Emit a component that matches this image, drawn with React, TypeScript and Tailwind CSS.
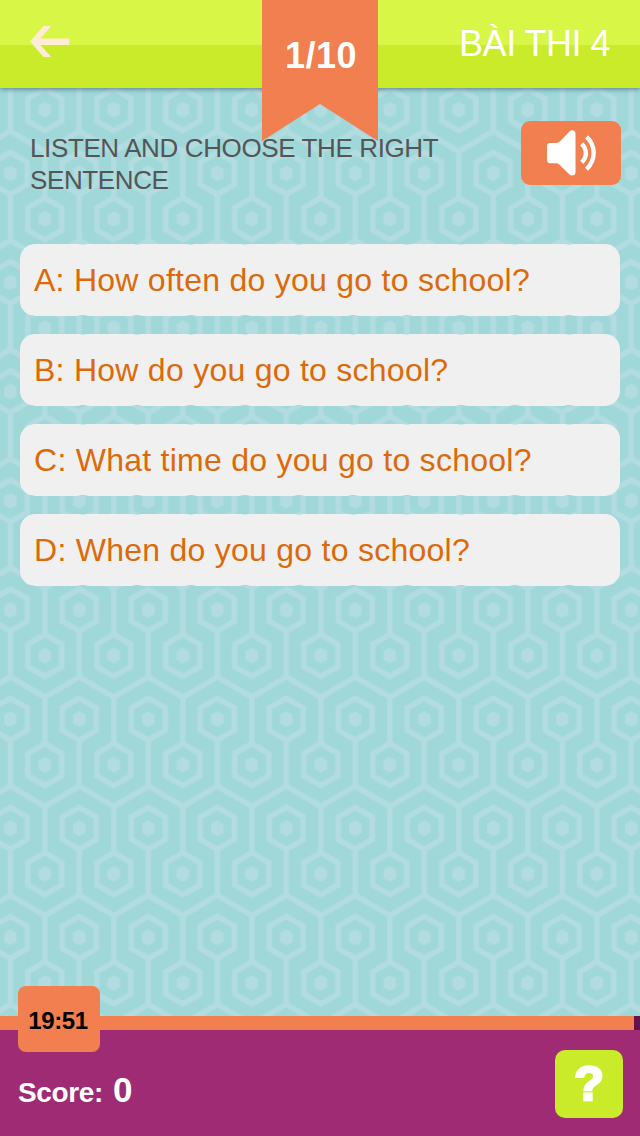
const OPTIONS = [
  { key: "A", text: "How often do you go to school?" },
  { key: "B", text: "How do you go to school?" },
  { key: "C", text: "What time do you go to school?" },
  { key: "D", text: "When do you go to school?" },
];

function HexCell({ x, y }: Readonly<{ x: number; y: number }>) {
  return (
    <g transform={`translate(${x} ${y})`}>
      <path
        d="M0 -21L17 -11.2V11.2L0 21L-17 11.2V-11.2Z"
        fill="none"
        stroke="#b2dce0"
        strokeWidth="5.4"
      />
      <path d="M0 -7.8L6.2 -4.4V4.4L0 7.8L-6.2 4.4V-4.4Z" fill="#b2dce0" />
    </g>
  );
}

function HexBackground() {
  return (
    <svg aria-hidden="true" className="absolute inset-0 h-full w-full">
      <defs>
        <pattern
          height="109.15"
          id="hexes"
          patternTransform="translate(-24.2 146.4)"
          patternUnits="userSpaceOnUse"
          width="69"
        >
          <HexCell x={34.5} y={27} />
          <HexCell x={0} y={72.5} />
          <HexCell x={69} y={72.5} />
          <path
            d="M-1 114.8L0 114.3L34.5 93.9L69 114.3L70 114.8M-1 5.7L0 5.1L34.5 -15.3L69 5.1L70 5.7M34.5 49V94M0 5V50M69 5V50"
            fill="none"
            stroke="#b2dce0"
            strokeWidth="5.5"
          />
        </pattern>
      </defs>
      <rect fill="url(#hexes)" height="100%" width="100%" />
    </svg>
  );
}

function BackArrow() {
  return (
    <svg fill="#ffecd6" height="32" viewBox="0 0 40 32" width="40">
      <path d="M0 15.5L13.5 0H21.2L10.5 12.5H39.5V19H10.5L21.2 31H13.5Z" />
    </svg>
  );
}

function SpeakerIcon() {
  return (
    <svg fill="none" height="46" viewBox="0 0 49 46" width="49">
      <path
        d="M3 13H9.5C11 13 12 12.3 13 11.3L22.5 1.6C24.8 -.8 28.5 .5 28.5 3.8V42.2C28.5 45.5 24.8 46.6 22.5 44.4L13 35.2C12 34.2 11 33.2 9.5 33.2H3C1 33.2 0 32 0 30.3V16C0 14.2 1 13 3 13Z"
        fill="#fff"
      />
      <path
        d="M34.6 13.8C40.3 19 40.3 27 34.8 32.3M39.6 6.8C49 15.5 49 30 39.6 39.2"
        stroke="#fff"
        strokeWidth="4.4"
      />
    </svg>
  );
}

export default function App() {
  return (
    <div className="relative isolate flex h-[1136px] w-[640px] flex-col overflow-hidden bg-[#a0d8da] font-['Liberation_Sans',Arial,sans-serif]">
      <HexBackground />

      <header className="relative flex h-[88px] shrink-0 items-start justify-between bg-linear-to-b from-[#d7f645] from-[45px] to-[#c9eb29] to-[45px] shadow-[0_1px_5px_rgba(40,70,90,0.65)]">
        <button aria-label="Back" className="pt-[26px] pl-[30px]" type="button">
          <BackArrow />
        </button>
        <h1 className="pt-[22px] pr-[30px] text-[36px] leading-[44px] tracking-[-0.5px] text-white">
          BÀI THI 4
        </h1>
        <div className="absolute top-0 left-[262px] h-[141px] w-[116px] bg-[#f17f4f] pt-[34px] pl-0.5 text-center text-[36px] leading-[44px] font-bold tracking-[0.5px] text-white [clip-path:polygon(0_0,100%_0,100%_100%,50%_104px,0_100%)]">
          1/10
        </div>
      </header>

      <main className="relative flex grow flex-col px-5 pt-[33px]">
        <div className="flex h-[123px] items-start justify-between">
          <p className="w-[440px] pt-[11px] pl-2.5 text-[26px] leading-8 tracking-[-0.38px] text-[#555]">
            LISTEN AND CHOOSE THE RIGHT SENTENCE
          </p>
          <button
            aria-label="Play audio"
            className="mr-[-1px] flex h-16 w-[100px] items-center justify-center rounded-[9px] bg-[#f17f4f]"
            type="button"
          >
            <SpeakerIcon />
          </button>
        </div>

        <div className="flex flex-col gap-[18px]">
          {OPTIONS.map(({ key, text }) => (
            <button
              className="h-[72px] rounded-[15px] bg-[#f0f0f0] bg-[linear-gradient(90deg,transparent_5px,#a0d8daaa_9px,transparent_13px),linear-gradient(90deg,transparent_3px,#a0d8da_8px,#a0d8da_10px,transparent_15px)] bg-[length:54px_1px,54px_1px] bg-[position:0_0,0_100%] bg-repeat-x pl-3.5 text-left text-[32px] tracking-[0.26px] text-[#dc6a09]"
              key={key}
              type="button"
            >
              {key}: {text}
            </button>
          ))}
        </div>
      </main>

      <footer className="relative h-[120px] shrink-0 bg-[#9f2b74]">
        <div className="h-3.5 bg-[#66124a]">
          <div className="h-full w-[634px] bg-[#f17f4f]" />
        </div>
        <div className="absolute top-[-30px] left-[18px] flex h-[66px] w-[82px] items-center justify-center rounded-lg bg-[#f17f4f] pt-1 pr-0.5 text-[24px] font-bold tracking-[-0.4px] text-black">
          19:51
        </div>
        <div className="flex items-start justify-between pt-5 pr-[17px] pl-[18px]">
          <p className="flex items-baseline gap-2.5 pt-5 text-[28px] leading-10 font-bold tracking-[-0.35px] text-white">
            Score: <span className="text-[35px]">0</span>
          </p>
          <button
            aria-label="Help"
            className="flex h-[68px] w-[68px] items-center justify-center rounded-[10px] bg-[#c9eb29] pb-0.5 text-[49px] leading-none font-bold text-white [-webkit-text-stroke:2.5px_white]"
            type="button"
          >
            ?
          </button>
        </div>
      </footer>
    </div>
  );
}
